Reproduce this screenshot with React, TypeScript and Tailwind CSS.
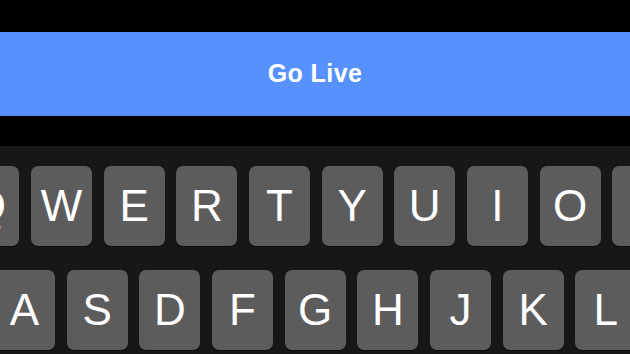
import React from "react";

const row1 = ["Q", "W", "E", "R", "T", "Y", "U", "I", "O", "P"];
const row2 = ["A", "S", "D", "F", "G", "H", "J", "K", "L"];

function Key({ label }: { label: string }) {
  return (
    <div className="flex h-[80px] w-[61px] shrink-0 items-center justify-center rounded-[7px] bg-[#5c5c5c] text-[44px] leading-none text-white shadow-[0_1px_0_#0b0b0b]">
      {label}
    </div>
  );
}

export default function App() {
  return (
    <div
      className="flex h-[354px] w-[630px] flex-col overflow-hidden bg-black"
      style={{ fontFamily: '"Liberation Sans", Arial, Helvetica, sans-serif' }}
    >
      <div className="h-[32px] shrink-0" />
      <button className="flex h-[84px] w-full shrink-0 items-center justify-center border-b border-[#4f88ee] bg-[#5691fd] text-[25px] font-bold tracking-[0.4px] text-white">
        Go Live
      </button>
      <div className="h-[30px] shrink-0" />
      <div className="flex flex-1 flex-col gap-[24px] overflow-hidden bg-[#171717] pt-[20px]">
        <div className="ml-[-41.7px] flex gap-[11.67px]">
          {row1.map((k) => (
            <Key key={k} label={k} />
          ))}
        </div>
        <div className="ml-[-6px] flex gap-[11.67px]">
          {row2.map((k) => (
            <Key key={k} label={k} />
          ))}
        </div>
      </div>
    </div>
  );
}
